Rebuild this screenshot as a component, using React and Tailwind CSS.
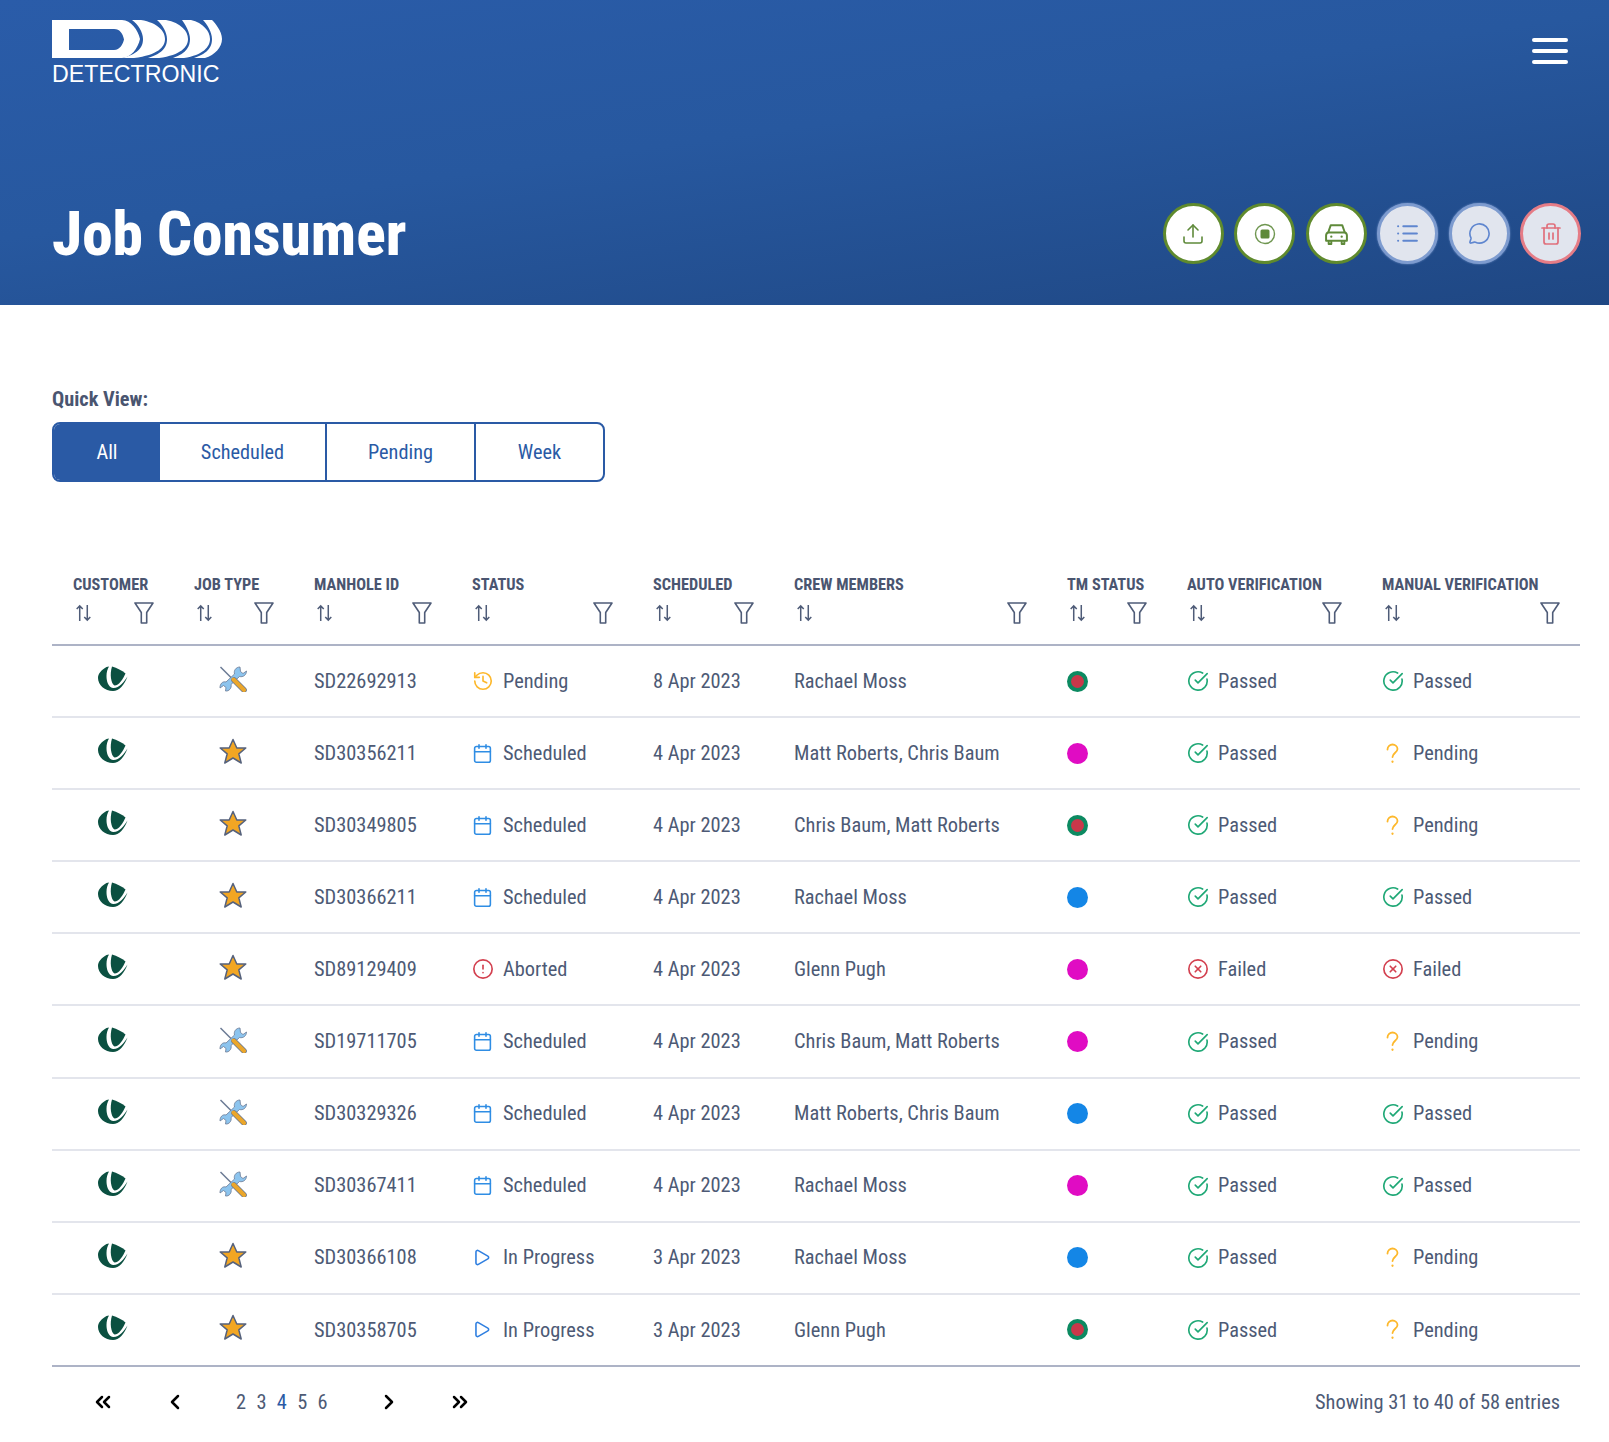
import React from "react";
import { Upload, List, MessageCircle, Trash2, History, Calendar, CircleAlert, Play, CircleCheckBig, CircleX, ChevronsLeft, ChevronLeft, ChevronRight, ChevronsRight } from "lucide-react";

const COLS = "grid grid-cols-[122px_120px_158px_181px_141px_273px_120px_195px_1fr]";

const Crescent = ({ t, r, i }) => (
  <path d={`M${t} 0H${t + 9}C${r - 7} 3 ${r} 11 ${r} 19C${r} 27 ${r - 7} 35 ${t + 2} 38H${t - 9}C${i - 3} 33 ${i} 26 ${i} 19C${i} 12 ${i - 5} 4 ${t} 0Z`} fill="#fff" />
);

const Logo = () => (
  <div className="flex flex-col w-[170px]">
    <svg viewBox="0 0 170 38" width="170" height="38">
      <path fillRule="evenodd" fill="#fff" d="M0 0H70C79 0 86 10 88 19C86 28 79 38 70 38H0ZM17 9V30H62C68 30 71 24 72 19.5C71 14 68 9 62 9Z" />
      <Crescent t={80} r={113} i={91} />
      <Crescent t={105} r={136} i={115} />
      <Crescent t={130} r={158} i={138} />
      <Crescent t={151} r={170} i={160} />
    </svg>
    <span className="font-['Liberation_Sans',sans-serif] text-[23.2px] leading-[24px] mt-[4px] text-white whitespace-nowrap [font-stretch:normal]">DETECTRONIC</span>
  </div>
);

const Uu = () => (
  <svg viewBox="0 0 30 25" width="30" height="25" fill="#0b5041">
    <path d="M8.5 1C3 4 0 8 0 12C0 19 7 25 15 25C21 25 26.5 19 29.5 10.5C26 16 21 22.5 15 22C10 21 8.5 15 8.5 10C8.5 6 9.5 3 11 .5Z" />
    <path d="M14 .5C19 2 24 4.5 27.5 7.5C25 13 21 19.5 16.5 19.5C13 18 11.5 8 14 .5Z" />
  </svg>
);

const Tools = () => (
  <svg viewBox="0 0 28 26" width="28" height="26">
    <path d="M1.5 1 13 12.5" stroke="#6b7a94" strokeWidth="1.5" />
    <path fill="#8cc4ee" stroke="#6b7a94" strokeWidth=".8" d="M21 1C17 1 14.5 4.5 15.5 8L7 16C3.5 15 .8 18 1 22L4.5 19.5L7 21.5L6.5 25C10 25.5 13 22 12 18.5L20.5 10.5C24 11.5 27.5 9 27.5 5L24 7.5L21.5 5.5Z" />
    <path d="M15 14 25 24" stroke="#6b7a94" strokeWidth="5.6" strokeLinecap="round" />
    <path d="M14.5 13.5 25 24" stroke="#eba62a" strokeWidth="4" strokeLinecap="round" />
  </svg>
);

const Star = () => (
  <svg viewBox="0 0 28 27" width="28" height="27">
    <path fill="#f2a623" stroke="#56627c" strokeWidth="1.5" strokeLinejoin="round" d="M14 1.5L17.8 10H26.8L19.8 15.8L22.2 25L14 20L5.8 25L8.2 15.8L1.2 10H10.2Z" />
  </svg>
);

const SortIcon = () => (
  <svg viewBox="0 0 18 19" width="17" height="18" className="ml-[2px]" fill="none" stroke="#4f5c78" strokeWidth="1.6">
    <path d="M5 18V2M1.8 5.2 5 2l3.2 3.2" />
    <path d="M13 1v16M9.8 13.8 13 17l3.2-3.2" />
  </svg>
);

const FilterIcon = () => (
  <svg viewBox="0 0 20 22" width="20" height="22" className="-mr-[1px]" fill="none" stroke="#4f5c78" strokeWidth="1.6" strokeLinejoin="round">
    <path d="M1 1H19L12.7 10.5V21H7.3V10.5Z" />
  </svg>
);

const CarIcon = () => (
  <svg viewBox="0 0 24 24" width="25" height="25" fill="none" stroke="#5f8a3a" strokeWidth="1.9" strokeLinejoin="round">
    <path d="M6.5 4H17.5L20 11H4Z" />
    <path d="M4 11C2.5 11.5 2 13 2 14V19H22V14C22 13 21.5 11.5 20 11" />
    <path d="M4.5 19V22H7V19M17 19V22H19.5V19" />
    <circle cx="7" cy="15" r="1.1" fill="#5f8a3a" stroke="none" />
    <circle cx="17" cy="15" r="1.1" fill="#5f8a3a" stroke="none" />
  </svg>
);

const Question = () => (
  <svg viewBox="0 0 21 21" width="21" height="21" fill="none" stroke="#fdb82c" strokeWidth="1.8" strokeLinecap="round">
    <path d="M5.5 6.5C5.5 3.5 8 1.5 10.5 1.5C13.2 1.5 15.5 3.5 15.5 6C15.5 9.5 10.5 10 10.5 14" />
    <path d="M10.5 18.5v.3" strokeWidth="2.2" />
  </svg>
);

const Dot = ({ kind }) => {
  if (kind === "g")
    return <div className="flex items-center justify-center w-[21px] h-[21px] rounded-full bg-[#0c8a61]"><div className="w-[13px] h-[13px] rounded-full bg-[#c9384a]" /></div>;
  if (kind === "m") return <div className="w-[21px] h-[21px] rounded-full bg-[#e00cc3]" />;
  return <div className="w-[21px] h-[21px] rounded-full bg-[#1486e6]" />;
};

const StatusIcon = ({ s }) => {
  if (s === "Pending") return <History size={22} strokeWidth={1.8} color="#fdb82c" />;
  if (s === "Scheduled") return <Calendar size={21} strokeWidth={1.8} color="#2f8de4" />;
  if (s === "Aborted") return <CircleAlert size={22} strokeWidth={1.8} color="#d3404f" />;
  return <Play size={19} strokeWidth={2} color="#2f7fe0" />;
};

const Verif = ({ v }) => (
  <div className="flex items-center">
    <span className="w-[31px] flex-none">
      {v === "Passed" && <CircleCheckBig size={22} strokeWidth={1.8} color="#1fa876" />}
      {v === "Pending" && <Question />}
      {v === "Failed" && <CircleX size={22} strokeWidth={1.8} color="#d3404f" />}
    </span>
    <span>{v}</span>
  </div>
);

const rows = [
  ["t", "SD22692913", "Pending", "8 Apr 2023", "Rachael Moss", "g", "Passed", "Passed"],
  ["s", "SD30356211", "Scheduled", "4 Apr 2023", "Matt Roberts, Chris Baum", "m", "Passed", "Pending"],
  ["s", "SD30349805", "Scheduled", "4 Apr 2023", "Chris Baum, Matt Roberts", "g", "Passed", "Pending"],
  ["s", "SD30366211", "Scheduled", "4 Apr 2023", "Rachael Moss", "b", "Passed", "Passed"],
  ["s", "SD89129409", "Aborted", "4 Apr 2023", "Glenn Pugh", "m", "Failed", "Failed"],
  ["t", "SD19711705", "Scheduled", "4 Apr 2023", "Chris Baum, Matt Roberts", "m", "Passed", "Pending"],
  ["t", "SD30329326", "Scheduled", "4 Apr 2023", "Matt Roberts, Chris Baum", "b", "Passed", "Passed"],
  ["t", "SD30367411", "Scheduled", "4 Apr 2023", "Rachael Moss", "m", "Passed", "Passed"],
  ["s", "SD30366108", "In Progress", "3 Apr 2023", "Rachael Moss", "b", "Passed", "Pending"],
  ["s", "SD30358705", "In Progress", "3 Apr 2023", "Glenn Pugh", "g", "Passed", "Pending"],
];

const headers = ["CUSTOMER", "JOB TYPE", "MANHOLE ID", "STATUS", "SCHEDULED", "CREW MEMBERS", "TM STATUS", "AUTO VERIFICATION", "MANUAL VERIFICATION"];

const ActionBtn = ({ border, fill, children }) => (
  <button className={`w-[61px] h-[61px] rounded-full border-[3px] flex items-center justify-center ${border} ${fill}`}>{children}</button>
);

export default function App() {
  return (
    <div className="bg-white font-['Roboto',sans-serif] font-stretch-condensed text-[#4d5a75] min-h-[1442px]">
      <header className="h-[305px] bg-[linear-gradient(172deg,#2a5ca9_0%,#27589f_45%,#1f4783_100%)] pl-[52px] pr-[28px] pt-[20px] pb-[41px] flex flex-col justify-between">
        <div className="flex justify-between items-start">
          <Logo />
          <div className="flex flex-col gap-[7px] mt-[18px] mr-[13px]">
            <div className="w-[36px] h-[4px] bg-white rounded-full" />
            <div className="w-[36px] h-[4px] bg-white rounded-full" />
            <div className="w-[36px] h-[4px] bg-white rounded-full" />
          </div>
        </div>
        <div className="flex justify-between items-center">
          <h1 className="text-white font-extrabold text-[61.3px] leading-[60px]">Job Consumer</h1>
          <div className="flex gap-[10.5px]">
            <ActionBtn border="border-[#5f8a2d]" fill="bg-white"><Upload size={24} strokeWidth={1.6} color="#5f8a3a" /></ActionBtn>
            <ActionBtn border="border-[#5f8a2d]" fill="bg-white">
              <svg viewBox="0 0 24 24" width="24" height="24"><circle cx="12" cy="12" r="9.5" fill="none" stroke="#6f9650" strokeWidth="1.4" /><rect x="7.5" y="7.5" width="9" height="9" rx="1.5" fill="#5f8a3a" /></svg>
            </ActionBtn>
            <ActionBtn border="border-[#5f8a2d]" fill="bg-white"><CarIcon /></ActionBtn>
            <ActionBtn border="border-[#7d9bcf] shadow-[0_0_2px_#7d9bcf]" fill="bg-[#e1e5ee]"><List size={25} strokeWidth={2} color="#5f86cf" /></ActionBtn>
            <ActionBtn border="border-[#7d9bcf] shadow-[0_0_2px_#7d9bcf]" fill="bg-[#e1e5ee]"><MessageCircle size={23} strokeWidth={1.7} color="#5f86cf" /></ActionBtn>
            <ActionBtn border="border-[#e57c86]" fill="bg-[#e1e5ee]"><Trash2 size={24} strokeWidth={1.7} color="#e0707c" /></ActionBtn>
          </div>
        </div>
      </header>

      <main className="pl-[52px] pr-[29px] pt-[82px]">
        <div className="font-bold text-[20.3px] leading-[24px] text-[#4a5570]">Quick View:</div>
        <div className="mt-[11px] w-[553px] h-[60px] flex border-2 border-[#2a5aa5] rounded-lg overflow-hidden text-[20.3px] text-[#2a5aa5]">
          <div className="w-[106px] bg-[#2a5aa5] text-white flex items-center justify-center">All</div>
          <div className="w-[167px] border-r-2 border-[#2a5aa5] flex items-center justify-center">Scheduled</div>
          <div className="w-[149px] border-r-2 border-[#2a5aa5] flex items-center justify-center">Pending</div>
          <div className="flex-1 flex items-center justify-center">Week</div>
        </div>

        <div className={`${COLS} mt-[91px] pb-[20px] border-b-2 border-[#adb3c6]`}>
          {headers.map((h) => (
            <div key={h} className="pl-[20px] first:pl-[21px] pr-[21px]">
              <div className="font-bold text-[16.3px] leading-[24px] text-[#4a5570] whitespace-nowrap">{h}</div>
              <div className="flex justify-between items-center mt-[5px]">
                <SortIcon />
                <FilterIcon />
              </div>
            </div>
          ))}
        </div>

        {rows.map((r, i) => (
          <div key={r[1]} className={`${COLS} items-center h-[72.1px] border-b-2 text-[20.4px] ${i === rows.length - 1 ? "border-[#adb3c6]" : "border-[#e3e5ec]"}`}>
            <div className="flex justify-center -mt-[5px]"><Uu /></div>
            <div className="flex justify-center -mt-[4px] -ml-[2px]">{r[0] === "t" ? <Tools /> : <Star />}</div>
            <div className="pl-[20px]">{r[1]}</div>
            <div className="pl-[20px] flex items-center">
              <span className="w-[31px] flex-none"><StatusIcon s={r[2]} /></span>
              <span>{r[2]}</span>
            </div>
            <div className="pl-[20px]">{r[3]}</div>
            <div className="pl-[20px] whitespace-nowrap">{r[4]}</div>
            <div className="pl-[20px]"><Dot kind={r[5]} /></div>
            <div className="pl-[20px]"><Verif v={r[6]} /></div>
            <div className="pl-[20px]"><Verif v={r[7]} /></div>
          </div>
        ))}

        <div className="flex justify-between items-center h-[70px] text-[20.4px]">
          <div className="flex items-center pl-[39px] text-black">
            <ChevronsLeft size={24} strokeWidth={2.5} />
            <ChevronLeft size={24} strokeWidth={2.5} className="ml-[48px]" />
            <div className="flex gap-[10.3px] ml-[49px] text-[#4d5a75]">
              <span>2</span><span>3</span><span className="text-[#2a5aa5]">4</span><span>5</span><span>6</span>
            </div>
            <ChevronRight size={24} strokeWidth={2.5} className="ml-[49px]" />
            <ChevronsRight size={24} strokeWidth={2.5} className="ml-[47px]" />
          </div>
          <div className="pr-[20px]">Showing 31 to 40 of 58 entries</div>
        </div>
      </main>
    </div>
  );
}
